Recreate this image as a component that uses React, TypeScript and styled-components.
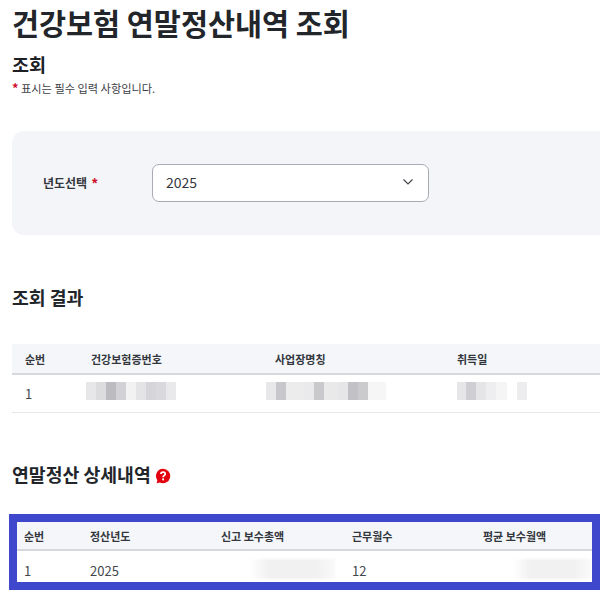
import React from "react";
import styled, { createGlobalStyle } from "styled-components";

const Global = createGlobalStyle`
  html, body { margin: 0; padding: 0; background: #fff; overflow: hidden; height: 600px; }
  body { font-family: "Noto Sans CJK KR", "Noto Sans", sans-serif; color: #1f2329; }
  * { box-sizing: border-box; }
`;

const Page = styled.div`
  width: 600px;
  height: 600px;
  overflow: hidden;
  padding: 0 0 0 12px;
  display: flex;
  flex-direction: column;
`;

const Title = styled.h1`
  margin: 1px 0 0;
  font-size: 29.4px;
  line-height: 42px;
  font-weight: 700;
  color: #22262b;
`;

const SubTitle = styled.h2`
  margin: 8px 0 0;
  font-size: 18.5px;
  line-height: 26px;
  font-weight: 700;
  color: #1d2025;
`;

const Notice = styled.p`
  margin: 3px 0 0;
  font-size: 11.2px;
  line-height: 16px;
  color: #3c4046;
`;

const Star = styled.span`
  color: #d0112b;
  font-weight: 700;
  font-size: 1.15em;
`;

const Panel = styled.section`
  margin-top: 35px;
  width: 640px;
  height: 104px;
  border-radius: 12px;
  background: #f3f5f9;
  padding: 33px 0 0 31px;
  display: flex;
  align-items: flex-start;
`;

const FieldLabel = styled.label`
  width: 109px;
  height: 37px;
  display: flex;
  align-items: center;
  gap: 4px;
  font-size: 12px;
  font-weight: 700;
  color: #33373d;
`;

const Select = styled.div`
  width: 277px;
  height: 38px;
  border: 1px solid #a8abb2;
  border-radius: 7px;
  background: #fff;
  padding: 0 14px 2px 13px;
  display: flex;
  align-items: center;
  justify-content: space-between;
  font-size: 14px;
  color: #34383e;
`;

const Heading = styled.h3<{ $top: number }>`
  margin: ${(p) => p.$top}px 0 0;
  font-size: 18.3px;
  line-height: 26px;
  font-weight: 700;
  color: #22262b;
  display: flex;
  align-items: center;
  gap: 4px;
`;

const Table = styled.div<{ $top: number }>`
  margin-top: ${(p) => p.$top}px;
  width: 600px;
  border-bottom: 1px solid #e6e7ea;
`;

const Row = styled.div<{ $cols: string; $head?: boolean; $h: number }>`
  display: grid;
  grid-template-columns: ${(p) => p.$cols};
  align-items: center;
  height: ${(p) => p.$h}px;
  background: ${(p) => (p.$head ? "#f4f6fa" : "#fff")};
  border-bottom: ${(p) => (p.$head ? "2px solid #d6d8dd" : "none")};
  font-size: ${(p) => (p.$head ? "11px" : "13px")};
  font-weight: ${(p) => (p.$head ? 700 : 400)};
  color: ${(p) => (p.$head ? "#33373d" : "#43474d")};
`;

const Cell = styled.div<{ $pad?: number; $drop?: number }>`
  padding-left: ${(p) => p.$pad ?? 13}px;
  padding-top: ${(p) => p.$drop ?? 0}px;
  white-space: nowrap;
  display: flex;
  align-items: center;
`;

const Mosaic = styled.div<{ $shift: number }>`
  display: flex;
  height: 18px;
  margin: 0 0 5px ${(p) => p.$shift}px;
  filter: blur(0.6px);
`;

const Tile = styled.i<{ $w: number; $c: string }>`
  display: block;
  width: ${(p) => p.$w}px;
  background: ${(p) => p.$c};
`;

const Smear = styled.div<{ $w: number; $shift: number }>`
  width: ${(p) => p.$w}px;
  height: 20px;
  margin-left: ${(p) => p.$shift}px;
  background: linear-gradient(90deg, #fff 0%, #f1f1f1 22%, #f1f1f1 78%, #fafafa 100%);
  filter: blur(1px);
`;

const Highlight = styled.div`
  margin: 27px 0 0 -3px;
  width: 591px;
  height: 76px;
  border: 8px solid #3f48cc;
  overflow: hidden;
  flex: none;
`;

const HelpMark = styled.svg`
  width: 16px;
  height: 16px;
  margin-top: 3px;
  flex: none;
`;

const Help = () => (
  <HelpMark viewBox="0 0 16 16" aria-hidden="true">
    <path d="M8 .8a7.2 7.2 0 1 1-3.2 13.65L1.6 15.3l.75-3.1A7.2 7.2 0 0 1 8 .8Z" fill="#e3000f" />
    <path
      d="M5.9 6.1c0-1.3 1-2 2.2-2s2.1.75 2.1 1.85c0 1.75-2.1 1.7-2.1 3.2"
      fill="none"
      stroke="#fff"
      strokeWidth="1.7"
    />
    <circle cx="8.1" cy="11.4" r="1.05" fill="#fff" />
  </HelpMark>
);

const Chevron = () => (
  <svg width="12" height="8" viewBox="0 0 12 8" aria-hidden="true">
    <path d="M1.5 1.5 6 6l4.5-4.5" fill="none" stroke="#43474d" strokeWidth="1.2" />
  </svg>
);

const tiles = (shift: number, list: [number, string][]) => (
  <Mosaic $shift={shift}>
    {list.map(([w, c], i) => (
      <Tile key={i} $w={w} $c={c} />
    ))}
  </Mosaic>
);

const colsA = "66px 184px 182px 1fr";
const colsB = "66px 131px 131px 131px 1fr";

export default function App() {
  return (
    <>
      <Global />
      <Page>
        <Title>건강보험 연말정산내역 조회</Title>
        <SubTitle>조회</SubTitle>
        <Notice>
          <Star>*</Star> 표시는 필수 입력 사항입니다.
        </Notice>
        <Panel>
          <FieldLabel>
            년도선택 <Star>*</Star>
          </FieldLabel>
          <Select>
            2025
            <Chevron />
          </Select>
        </Panel>
        <Heading $top={49}>조회 결과</Heading>
        <Table $top={34}>
          <Row $cols={colsA} $head $h={31}>
            <Cell>순번</Cell>
            <Cell>건강보험증번호</Cell>
            <Cell>사업장명칭</Cell>
            <Cell>취득일</Cell>
          </Row>
          <Row $cols={colsA} $h={37}>
            <Cell>1</Cell>
            <Cell>
              {tiles(-5, [
                [10, "#e7e7ea"], [10, "#dcdcdf"], [10, "#bcbcc0"], [10, "#d2d2d6"], [10, "#f2f2f3"],
                [10, "#e4e4e7"], [10, "#d6d6da"], [10, "#d9d9dd"], [10, "#e9e9eb"],
              ])}
            </Cell>
            <Cell>
              {tiles(-9, [
                [10, "#e8e8eb"], [10, "#c8c8cc"], [18, "#ececed"], [10, "#eaeaec"], [10, "#c9c9cc"],
                [14, "#e9e9ea"], [10, "#e6e6e8"], [10, "#c2c2c6"], [10, "#cbcbce"], [18, "#f6f6f7"],
              ])}
            </Cell>
            <Cell>
              {tiles(0, [
                [9, "#e6e6e9"], [10, "#cfcfd3"], [10, "#e5e5e8"], [10, "#eeeef0"], [11, "#f5f5f6"],
                [10, "#ffffff"], [10, "#ededef"],
              ])}
            </Cell>
          </Row>
        </Table>
        <Heading $top={48}>
          연말정산 상세내역
          <Help />
        </Heading>
        <Highlight>
          <Row $cols={colsB} $head $h={29}>
            <Cell $pad={7}>순번</Cell>
            <Cell $pad={7}>정산년도</Cell>
            <Cell $pad={7}>신고 보수총액</Cell>
            <Cell $pad={7}>근무월수</Cell>
            <Cell $pad={7}>평균 보수월액</Cell>
          </Row>
          <Row $cols={colsB} $h={31}>
            <Cell $pad={7} $drop={7}>1</Cell>
            <Cell $pad={7} $drop={7}>2025</Cell>
            <Cell $pad={7} $drop={4}>
              <Smear $w={85} $shift={29} />
            </Cell>
            <Cell $pad={7} $drop={7}>12</Cell>
            <Cell $pad={7} $drop={4}>
              <Smear $w={78} $shift={30} />
            </Cell>
          </Row>
        </Highlight>
      </Page>
    </>
  );
}
